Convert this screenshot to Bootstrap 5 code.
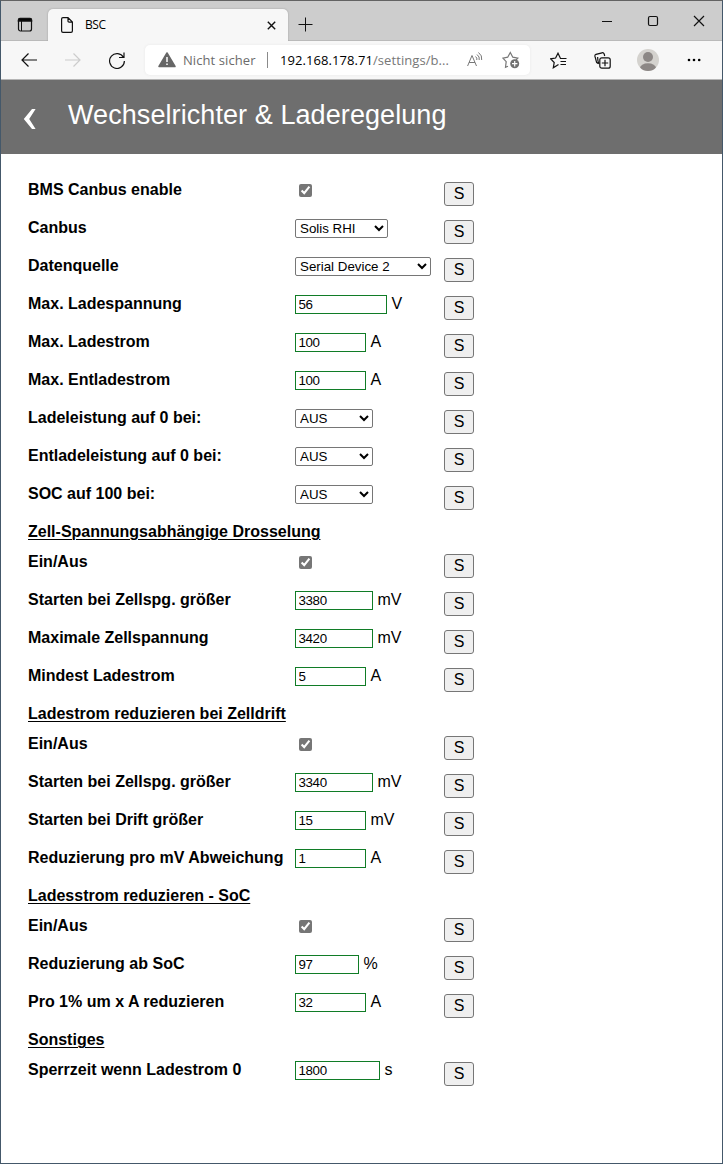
<!DOCTYPE html>
<html lang="de">
<head>
<meta charset="utf-8">
<meta name="viewport" content="width=device-width, initial-scale=1">
<title>BSC</title>
<link href="https://cdn.jsdelivr.net/npm/bootstrap@5.3.0/dist/css/bootstrap.min.css" rel="stylesheet">
<style>
body{font-family:"Liberation Sans",Arial,sans-serif;font-size:16px;color:#000;background:#fff}
.win{height:1164px;border:1px solid #44586a;border-top-color:#636363}
.chrome{font-family:"Open Sans","Noto Sans",sans-serif;font-size:13px;line-height:18px;color:#000}
.chrome svg{display:block;flex:none;fill:none;stroke:#111;stroke-width:1.2}
.strip{height:40px;background:#cdcdcd;box-shadow:inset 0 -1px #bababa}
.tab{width:240px;height:32px;margin:8px 0 0 15px;padding:0 12px 0 13px;background:#f7f7f7;border-radius:5px 5px 0 0;box-shadow:0 0 2px #999;clip-path:inset(-3px -3px 0 -3px)}
.tab-name{font-size:12px;margin-left:12px;letter-spacing:-.45px}
.tools{height:38px;background:#f7f7f7}
.addr{width:385px;height:30px;margin-left:20px;background:#fff;border-radius:5px;box-shadow:0 0 3px #e8e8e8}
.addr .sep{width:1px;height:16px;background:#8a8a8a;margin:0 12px 0 10px}
.secure{width:74px;color:#6b6b6b;margin-left:7px;white-space:nowrap;letter-spacing:.08px}
.url{width:187px;white-space:nowrap;color:#777;letter-spacing:.07px}
.url b{font-weight:400;color:#000}
.head{height:75px;background:#6e6e6e;border-top:1px solid #b5b5b5;color:#fff}
.head h1{font-size:27px;line-height:32px;font-weight:400;letter-spacing:.08px;margin:-5px 0 0 31px}
.settings{padding:20px 0 0 27px}
.opt{display:grid;grid-template-columns:267px 149px 30px;height:38px;align-items:start}
.opt>label{line-height:18px;padding-top:7px}
.opt>label,.grp{font-weight:700;white-space:nowrap}
.opt>div{display:flex;height:38px;padding-top:7px;line-height:18px}
.opt>div>span{margin-left:4.5px}
.grp{height:30px;line-height:18px;padding-top:7px;font-size:16px;margin:0;text-decoration:underline;text-decoration-thickness:1px;text-underline-offset:2px}
.opt input[type=text]{height:19px;border:1px solid #107c26;padding:0 3px 0 2.500px;font-size:13.333px;line-height:17px;letter-spacing:-.35px;outline:0;border-radius:0;color:#000}
.opt select{height:19px;font-size:13.333px;border:1px solid #767676;border-radius:2px;background:#fff;color:#000;padding:0;line-height:17px}
.opt input[type=checkbox]{width:13px;height:13px;margin:3px 0 0 4px;accent-color:#767676}
.save{width:30px;height:24px;margin-top:8px;padding:0;border:1px solid #767676;border-radius:3px;background:#efefef;color:#000;font-size:16px;line-height:20px}
.w64{width:64px}.w71{width:71px}.w78{width:78px}.w85{width:85px}.w92{width:92px}.w93{width:93px}.w136{width:136px}
</style>
</head>
<body>
<div class="win overflow-hidden">
 <div class="chrome">
  <div class="strip d-flex">
   <svg width="16" height="16" style="margin:16px 0 0 16px" viewBox="0 0 16 16"><rect x="1.500" y="1.500" width="13" height="12.500" rx="2"/><path d="M1.500 4V3Q1.500 1.500 3 1.500H13Q14.500 1.500 14.500 3V4Z" fill="#000" stroke-width="1.500"/><path d="M4.500 4v10" stroke-width="1"/></svg>
   <div class="tab d-flex align-items-center">
    <svg width="12" height="16" viewBox="0 0 12 16"><path d="M2 .600H7L11.400 5V14Q11.400 15.400 10 15.400H2Q.600 15.400 .600 14V2Q.600 .600 2 .600ZM7 .600V4Q7 5.200 8.200 5.200H11.400"/></svg>
    <span class="tab-name">BSC</span>
    <svg class="ms-auto" width="9" height="9" viewBox="0 0 9 9"><path d="M.800 .800 8.200 8.200M8.200 .800 .800 8.200" stroke-width="1.400"/></svg>
   </div>
   <svg width="15" height="15" style="margin:16px 0 0 10px" viewBox="0 0 15 15"><path d="M.500 7.500h14M7.500 .500v14" stroke-width="1"/></svg>
   <svg class="ms-auto" width="108" height="12" style="margin-top:14px;margin-right:14px" viewBox="0 0 108 12"><path d="M2 6.500h10" stroke-width="1"/><rect x="48.500" y="1.500" width="9" height="9" rx="1.500"/><path d="M94 1 104 11M104 1 94 11"/></svg>
  </div>
  <div class="tools d-flex align-items-center">
   <svg width="16" height="14" style="margin-left:20px" viewBox="0 0 16 14"><path d="M7.500 .500 1 7l6.500 6.500M1 7h15"/></svg>
   <svg width="16" height="14" style="margin-left:28px" viewBox="0 0 16 14"><path d="M8.500 .500 15 7l-6.500 6.500M15 7H0" style="stroke:#ccc"/></svg>
   <svg width="16" height="17" style="margin-left:28px" viewBox="0 0 16 17"><path d="M14.500 5.500A7.400 7.400 0 1 0 15.400 9M15 .500V5.500H10"/></svg>
   <div class="addr d-flex align-items-center">
    <svg width="18" height="16" style="margin-left:13px" viewBox="0 0 18 16"><path d="M9 1 17 14.500H1Z" fill="#666" stroke-width="1.500" stroke-linejoin="round" style="stroke:#666"/><path d="M9 5v5M9 11.500v1.500" style="stroke:#fff" stroke-width="1.500"/></svg>
    <span class="secure">Nicht sicher</span><span class="sep"></span>
    <span class="url"><b>192.168.178.71</b>/settings/b...</span>
    <svg width="17" height="16" viewBox="0 0 17 16"><path d="M.600 14 5 3.500 9.500 14M2 10.500h6M8.500 4.500Q10.500 6 9.800 8M10 2.500Q13 4.800 12.200 8M11.500 .500Q15.500 3.500 14.700 8" style="stroke:#777" stroke-width="1"/></svg>
    <svg width="18" height="18" style="margin-left:18px" viewBox="0 0 18 18"><path d="M6 15.200 3.500 16.200 4.200 10.700 .900 7.100 5.700 6.200 8.300 1.500 10.800 6.200 15.800 7.100 14 9" style="stroke:#777"/><circle cx="12.700" cy="12.700" r="4.500" fill="#707070" style="stroke:none"/><path d="M12.700 10v5.400M10 12.700h5.400" style="stroke:#fff"/></svg>
   </div>
   <svg width="17" height="17" style="margin-left:20px" viewBox="0 0 17 17"><path d="M8.500 12.500 3.300 15.800 4.200 10.500 .700 6.800 5.600 6 8 1.200 10.500 6.500H16.500M10.500 9.500H16M10.500 12.500H16"/></svg>
   <svg width="17" height="17" style="margin-left:27px" viewBox="0 0 17 17"><path d="M4 11.500 2.600 10.300 1 4.500Q.600 2.800 2 2.300L8 .800Q9.500 .400 10.200 2L10.700 4M5 12Q3.500 9 3.700 5"/><rect x="5.800" y="5.800" width="10.400" height="10.400" rx="2"/><path d="M11 7.800v6.400M7.800 11h6.400"/></svg>
   <svg width="22" height="22" style="margin-left:26px" viewBox="0 0 22 22"><clipPath id="avatar"><circle cx="11" cy="11" r="11"/></clipPath><g clip-path="url(#avatar)" style="stroke:none"><rect width="22" height="22" fill="#d4d2ce"/><circle cx="11" cy="8" r="5" fill="#8c8785"/><ellipse cx="11" cy="19" rx="8" ry="4.700" fill="#8c8785"/></g></svg>
   <svg width="14" height="4" style="margin-left:28px" viewBox="0 0 14 4"><g fill="#000" style="stroke:none"><circle cx="2" cy="2" r="1.300"/><circle cx="7" cy="2" r="1.300"/><circle cx="12.200" cy="2" r="1.300"/></g></svg>
  </div>
 </div>
 <header class="head d-flex align-items-center">
  <svg width="14" height="22" style="margin:4px 0 0 22px" viewBox="0 0 14 22"><path d="M9 1H12.600L6.200 11 12.600 21H9L.800 11Z" fill="#fff"/></svg>
  <h1>Wechselrichter &amp; Laderegelung</h1>
 </header>
 <main class="settings">
  <div class="opt"><label>BMS Canbus enable</label><div><input type="checkbox" checked></div><button class="save">S</button></div>
  <div class="opt"><label>Canbus</label><div><select class="w93"><option>Solis RHI</option></select></div><button class="save">S</button></div>
  <div class="opt"><label>Datenquelle</label><div><select class="w136"><option>Serial Device 2</option></select></div><button class="save">S</button></div>
  <div class="opt"><label>Max. Ladespannung</label><div><input type="text" class="w92" value="56"><span>V</span></div><button class="save">S</button></div>
  <div class="opt"><label>Max. Ladestrom</label><div><input type="text" class="w71" value="100"><span>A</span></div><button class="save">S</button></div>
  <div class="opt"><label>Max. Entladestrom</label><div><input type="text" class="w71" value="100"><span>A</span></div><button class="save">S</button></div>
  <div class="opt"><label>Ladeleistung auf 0 bei:</label><div><select class="w78"><option>AUS</option></select></div><button class="save">S</button></div>
  <div class="opt"><label>Entladeleistung auf 0 bei:</label><div><select class="w78"><option>AUS</option></select></div><button class="save">S</button></div>
  <div class="opt"><label>SOC auf 100 bei:</label><div><select class="w78"><option>AUS</option></select></div><button class="save">S</button></div>
  <h2 class="grp">Zell-Spannungsabhängige Drosselung</h2>
  <div class="opt"><label>Ein/Aus</label><div><input type="checkbox" checked></div><button class="save">S</button></div>
  <div class="opt"><label>Starten bei Zellspg. größer</label><div><input type="text" class="w78" value="3380"><span>mV</span></div><button class="save">S</button></div>
  <div class="opt"><label>Maximale Zellspannung</label><div><input type="text" class="w78" value="3420"><span>mV</span></div><button class="save">S</button></div>
  <div class="opt"><label>Mindest Ladestrom</label><div><input type="text" class="w71" value="5"><span>A</span></div><button class="save">S</button></div>
  <h2 class="grp">Ladestrom reduzieren bei Zelldrift</h2>
  <div class="opt"><label>Ein/Aus</label><div><input type="checkbox" checked></div><button class="save">S</button></div>
  <div class="opt"><label>Starten bei Zellspg. größer</label><div><input type="text" class="w78" value="3340"><span>mV</span></div><button class="save">S</button></div>
  <div class="opt"><label>Starten bei Drift größer</label><div><input type="text" class="w71" value="15"><span>mV</span></div><button class="save">S</button></div>
  <div class="opt"><label>Reduzierung pro mV Abweichung</label><div><input type="text" class="w71" value="1"><span>A</span></div><button class="save">S</button></div>
  <h2 class="grp">Ladesstrom reduzieren - SoC</h2>
  <div class="opt"><label>Ein/Aus</label><div><input type="checkbox" checked></div><button class="save">S</button></div>
  <div class="opt"><label>Reduzierung ab SoC</label><div><input type="text" class="w64" value="97"><span>%</span></div><button class="save">S</button></div>
  <div class="opt"><label>Pro 1% um x A reduzieren</label><div><input type="text" class="w71" value="32"><span>A</span></div><button class="save">S</button></div>
  <h2 class="grp">Sonstiges</h2>
  <div class="opt"><label>Sperrzeit wenn Ladestrom 0</label><div><input type="text" class="w85" value="1800"><span>s</span></div><button class="save">S</button></div>
 </main>
</div>
<script src="https://cdn.jsdelivr.net/npm/bootstrap@5.3.0/dist/js/bootstrap.bundle.min.js"></script>
</body>
</html>
